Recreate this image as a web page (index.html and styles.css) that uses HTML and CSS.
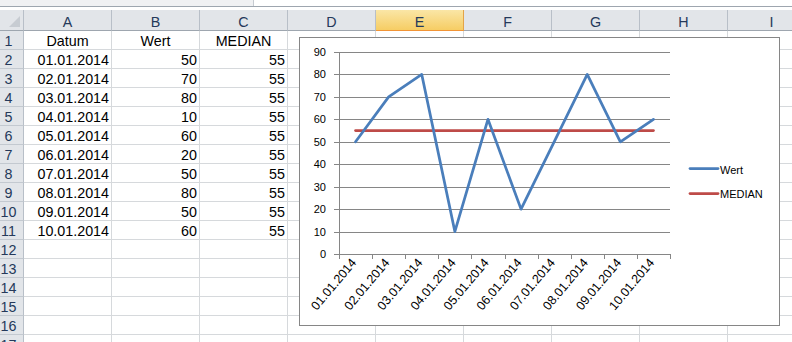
FILE: index.html
```html
<!DOCTYPE html>
<html lang="de">
  <head>
    <meta charset="UTF-8" />
    <meta name="viewport" content="width=device-width, initial-scale=1.0" />
    <title>Median Diagramm</title>
    <link rel="stylesheet" href="styles.css">
  </head>
  <body>
    <div class="topbar"><div class="topbar-left"></div></div>

    <div class="sheet" id="sheet"></div>

    <div class="chart">
      <svg id="chart" width="479" height="287" viewBox="300 38 479 287"></svg>
    </div>

    <script>
      const data = [
        ["01.01.2014", 50],
        ["02.01.2014", 70],
        ["03.01.2014", 80],
        ["04.01.2014", 10],
        ["05.01.2014", 60],
        ["06.01.2014", 20],
        ["07.01.2014", 50],
        ["08.01.2014", 80],
        ["09.01.2014", 50],
        ["10.01.2014", 60]
      ];
      const median = 55;
      const cols = ["A", "B", "C", "D", "E", "F", "G", "H", "I"];
      const sheet = document.getElementById("sheet");

      function addCell(cls, text) {
        const div = document.createElement("div");
        div.className = cls;
        if (text !== undefined) div.textContent = text;
        sheet.appendChild(div);
        return div;
      }

      addCell("corner").appendChild(document.createElement("span"));
      cols.forEach((c) => addCell(c === "E" ? "colhead selected" : "colhead", c));

      for (let r = 1; r <= 17; r++) {
        addCell("rowhead", r);
        for (let c = 0; c < cols.length; c++) {
          if (r === 1 && c < 3) {
            addCell("cell center", ["Datum", "Wert", "MEDIAN"][c]);
          } else if (r <= 11 && c < 3) {
            const row = data[r - 2];
            addCell("cell right", [row[0], row[1], median][c]);
          } else {
            addCell("cell");
          }
        }
      }

      // chart, drawn in page coordinates
      const plotLeft = 339, plotRight = 670, plotTop = 52, plotBottom = 254;
      const step = (plotRight - plotLeft) / data.length;
      const yPos = (v) => plotBottom - (v * (plotBottom - plotTop)) / 90;
      const xPos = (i) => plotLeft + (i + 0.5) * step;
      let out = "";

      for (let v = 0; v <= 90; v += 10) {
        const y = Math.round(yPos(v)) + 0.5;
        if (v > 0) {
          out += `<line class="grid" x1="${plotLeft}" y1="${y}" x2="${plotRight}" y2="${y}"/>`;
        }
        out += `<line class="grid" x1="${plotLeft - 5}" y1="${y}" x2="${plotLeft}" y2="${y}"/>`;
        out += `<text class="ylabel" x="326" y="${y + 3.5}">${v}</text>`;
      }
      out += `<line class="grid" x1="${plotLeft + 0.5}" y1="${plotTop}" x2="${plotLeft + 0.5}" y2="${plotBottom}"/>`;
      out += `<line class="grid" x1="${plotLeft}" y1="${plotBottom + 0.5}" x2="${plotRight}" y2="${plotBottom + 0.5}"/>`;

      for (let i = 0; i <= data.length; i++) {
        const x = Math.round(plotLeft + i * step) + 0.5;
        out += `<line class="grid" x1="${x}" y1="${plotBottom}" x2="${x}" y2="${plotBottom + 5}"/>`;
      }

      data.forEach((row, i) => {
        out += `<text class="xlabel" transform="translate(${xPos(i) + 1.5} 263) rotate(-50)">${row[0]}</text>`;
      });

      const last = data.length - 1;
      out += `<line class="median" x1="${xPos(0)}" y1="${yPos(median)}" x2="${xPos(last)}" y2="${yPos(median)}"/>`;
      const pts = data.map((row, i) => `${xPos(i)},${yPos(row[1])}`).join(" ");
      out += `<polyline class="series" points="${pts}"/>`;

      // legend
      out += `<line class="series" x1="690" y1="168.5" x2="718" y2="168.5"/>`;
      out += `<text class="legend" x="720" y="173.5">Wert</text>`;
      out += `<line class="median" x1="690" y1="193.5" x2="718" y2="193.5"/>`;
      out += `<text class="legend" x="720" y="197.5">MEDIAN</text>`;

      document.getElementById("chart").innerHTML = out;
    </script>
  </body>
</html>
```

FILE: styles.css
```css
* {
  margin: 0;
  padding: 0;
  box-sizing: border-box;
}
body {
  position: relative;
  width: 792px;
  height: 342px;
  overflow: hidden;
  font-family: "Liberation Sans", Arial, sans-serif;
  font-size: 14.3px;
  background-color: #fff;
  color: #000;
}
.topbar {
  height: 10px;
  background-color: #fff;
}
.topbar-left {
  width: 254px;
  height: 7px;
  background-color: #f0f1f3;
  border-right: 1px solid #c6cbd1;
  border-bottom: 1px solid #9ea6af;
}
.topbar::after {
  content: "";
  display: block;
  margin-top: -1px;
  height: 1px;
  background-color: #9ea6af;
}
.sheet {
  display: grid;
  grid-template-columns: 24px repeat(9, 88px);
  grid-template-rows: 21px;
  grid-auto-rows: 19px;
}
.corner,
.colhead,
.rowhead {
  background-color: #e2e5e9;
  color: #25395a;
  border-right: 1px solid #b8bfc8;
  border-bottom: 1px solid #9ea6af;
}
.corner {
  display: flex;
  justify-content: flex-end;
  align-items: flex-end;
  padding: 0 3px 3px 0;
}
.corner span {
  width: 11px;
  height: 11px;
  background-color: #c7ccd2;
  clip-path: polygon(100% 0, 100% 100%, 0 100%);
}
.colhead {
  text-align: center;
  line-height: 14px;
  padding-top: 5px;
}
.colhead.selected {
  background: linear-gradient(#fae6a6, #f6cd64);
  border-right-color: #e3a448;
  border-bottom: 1px solid #f29436;
}
.rowhead {
  text-align: center;
  padding-right: 6px;
  padding-top: 3px;
  line-height: 14px;
  border-bottom-color: #c3c9d0;
}
.cell {
  border-right: 1px solid #d6d9dc;
  border-bottom: 1px solid #d6d9dc;
  padding: 3px 2px 0;
  line-height: 14px;
  white-space: nowrap;
  overflow: hidden;
}
.center {
  text-align: center;
}
.right {
  text-align: right;
}
.chart {
  position: absolute;
  left: 299px;
  top: 37px;
  width: 481px;
  height: 289px;
  background-color: #fff;
  border: 1px solid #868686;
}
.chart svg {
  display: block;
}
.chart text {
  font-family: "Liberation Sans", Arial, sans-serif;
  font-size: 11px;
  fill: #000;
}
.chart .xlabel {
  font-size: 12.5px;
}
.ylabel,
.xlabel {
  text-anchor: end;
}
.grid {
  stroke: #868686;
  stroke-width: 1;
}
.series,
.median {
  fill: none;
  stroke-width: 2.75;
  stroke-linejoin: round;
  stroke-linecap: round;
}
.series {
  stroke: #4a7ebb;
}
.median {
  stroke: #be4b48;
}
```
